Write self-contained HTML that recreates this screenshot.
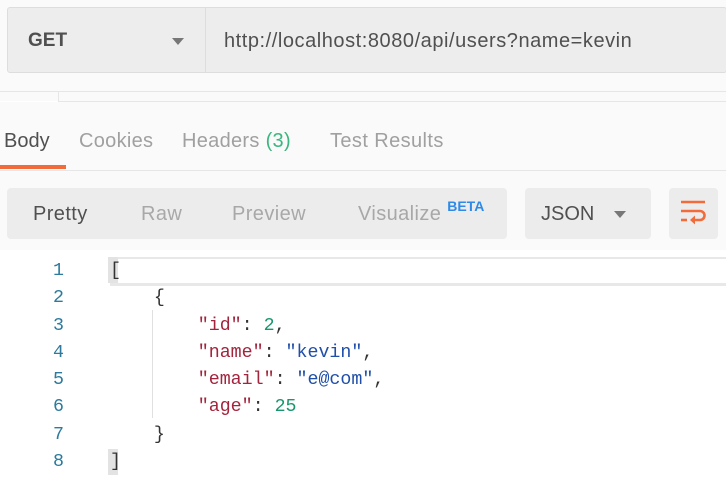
<!DOCTYPE html>
<html><head><style>
body{margin:0;width:726px;height:480px;background:#fff;font-family:"Liberation Sans",sans-serif;position:relative;overflow:hidden}
.a{position:absolute}
.top{left:0;top:0;width:726px;height:250px;background:#fafafa}
.mono{font-family:"Liberation Mono",monospace;font-size:18.3px}
</style></head><body>
<div class="a top"></div>
<div class="a" style="left:7px;top:7px;width:720px;height:66px;background:#ededed;border:1px solid #ddd;border-radius:3px;box-sizing:border-box"></div>
<div class="a" style="left:205px;top:7px;width:1px;height:66px;background:#ddd"></div>
<div class="a" style="left:28px;top:30px;font-size:19px;font-weight:bold;color:#505050">GET</div>
<div class="a" style="left:172px;top:38px;width:0;height:0;border-left:6px solid transparent;border-right:6px solid transparent;border-top:7px solid #777"></div>
<div class="a" style="left:224px;top:30px;font-size:20px;letter-spacing:0.55px;color:#505050">http://localhost:8080/api/users?name=kevin</div>
<div class="a" style="left:0;top:91px;width:726px;height:1px;background:#e6e6e6"></div>
<div class="a" style="left:58px;top:92px;width:1px;height:9px;background:#e6e6e6"></div>
<div class="a" style="left:0;top:101px;width:726px;height:1px;background:#e6e6e6"></div>
<div class="a" style="left:0;top:101px;width:58px;height:1px;background:#fff"></div>
<div class="a" style="left:4px;top:130px;font-size:20px;color:#505050">Body</div>
<div class="a" style="left:79px;top:130px;font-size:20px;letter-spacing:0.3px;color:#a0a0a0">Cookies</div>
<div class="a" style="left:182px;top:130px;font-size:20px;letter-spacing:0.3px;color:#a0a0a0">Headers <span style="color:#3cb67f">(3)</span></div>
<div class="a" style="left:330px;top:130px;font-size:20px;letter-spacing:0.4px;color:#a0a0a0">Test Results</div>
<div class="a" style="left:0;top:165px;width:66px;height:4px;background:#f26b3a"></div>
<div class="a" style="left:0;top:170px;width:726px;height:1px;background:#e6e6e6"></div>
<div class="a" style="left:7px;top:188px;width:500px;height:51px;background:#ececec;border-radius:4px"></div>
<div class="a" style="left:33px;top:203px;font-size:20px;letter-spacing:0.4px;color:#505050">Pretty</div>
<div class="a" style="left:141px;top:203px;font-size:20px;letter-spacing:0.4px;color:#a8a8a8">Raw</div>
<div class="a" style="left:232px;top:203px;font-size:20px;letter-spacing:0.4px;color:#a8a8a8">Preview</div>
<div class="a" style="left:358px;top:203px;font-size:20px;letter-spacing:0.4px;color:#a8a8a8">Visualize <span style="color:#2e8ae6;font-size:14px;font-weight:bold;letter-spacing:0;position:relative;top:-9px">BETA</span></div>
<div class="a" style="left:525px;top:188px;width:126px;height:51px;background:#ececec;border-radius:4px"></div>
<div class="a" style="left:541px;top:203px;font-size:20px;color:#505050">JSON</div>
<div class="a" style="left:614px;top:211px;width:0;height:0;border-left:6px solid transparent;border-right:6px solid transparent;border-top:7px solid #777"></div>
<div class="a" style="left:669px;top:188px;width:49px;height:51px;background:#ececec;border-radius:4px"></div>
<svg class="a" style="left:680px;top:199px" width="28" height="30" viewBox="0 0 28 30"><g stroke="#f26b3a" stroke-width="2.6" fill="none"><path d="M1 3H25"/><path d="M1 12H20a4.5 4.5 0 0 1 0 9H13"/><path d="M1 21H7"/></g><path d="M15 16.5L10 21l5 4.5z" fill="#f26b3a"/></svg>
<div class="a" style="left:110px;top:257px;width:616px;height:24px;border-top:2px solid #e8e8e8;border-bottom:3px solid #e8e8e8"></div>
<div class="a" style="left:108px;top:257px;width:10px;height:26px;background:#e3e3e3"></div>
<div class="a" style="left:108px;top:449px;width:10px;height:26px;background:#e3e3e3"></div>
<div class="a" style="left:152px;top:310px;width:1px;height:108px;background:#e0e0e0"></div>
<div class="a mono" style="left:44px;top:258px;line-height:27.3px;color:#2d7a9c;text-align:right;width:20px">1<br>2<br>3<br>4<br>5<br>6<br>7<br>8</div>
<div class="a mono" style="left:110px;top:258px;line-height:27.3px;color:#333;white-space:pre">[
    {
        <span style="color:#a3243c">"id"</span>: <span style="color:#19976b">2</span>,
        <span style="color:#a3243c">"name"</span>: <span style="color:#1f4fa8">"kevin"</span>,
        <span style="color:#a3243c">"email"</span>: <span style="color:#1f4fa8">"e@com"</span>,
        <span style="color:#a3243c">"age"</span>: <span style="color:#19976b">25</span>
    }
]</div>
</body></html>
